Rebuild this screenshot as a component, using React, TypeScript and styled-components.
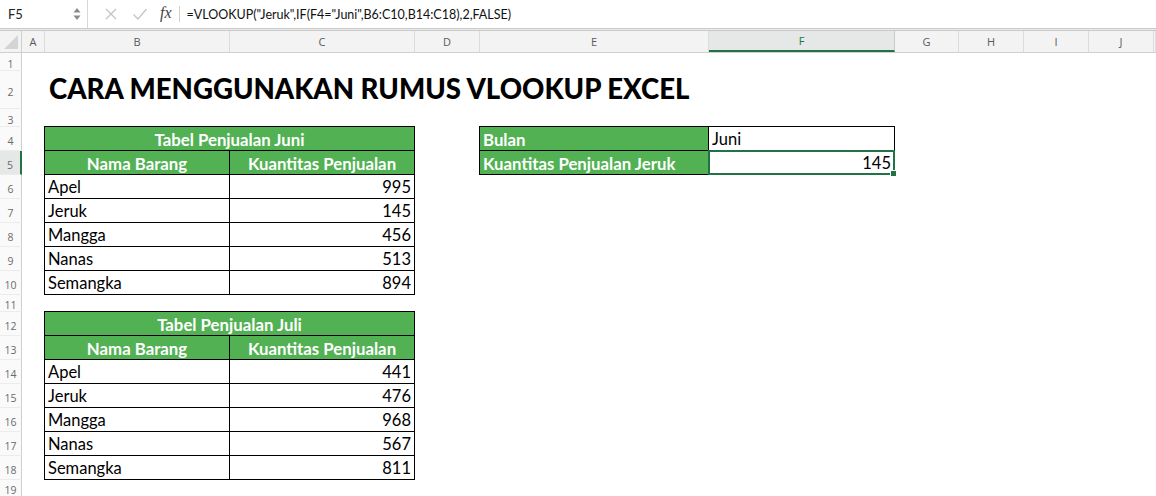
import React from 'react';
import styled, { createGlobalStyle, css } from 'styled-components';

const GlobalStyle = createGlobalStyle`
    html, body {
        margin: 0;
        padding: 0;
        background: #ffffff;
    }
    body {
        font-family: Lato, "Liberation Sans", sans-serif;
        width: 1156px;
        height: 496px;
        overflow: hidden;
    }
`

const GREEN = '#51b153'
const EXCEL_GREEN = '#217346'

const columns = [
    { name: 'A', width: 23 },
    { name: 'B', width: 185 },
    { name: 'C', width: 185 },
    { name: 'D', width: 65 },
    { name: 'E', width: 229 },
    { name: 'F', width: 186 },
    { name: 'G', width: 64 },
    { name: 'H', width: 65 },
    { name: 'I', width: 65 },
    { name: 'J', width: 65 },
]

const rowHeights = [18, 38, 18, 24, 24, 24, 24, 24, 24, 24, 17, 24, 24, 24, 24, 24, 24, 24, 17]

const gridCols = `22px ${columns.map((c) => c.width + 'px').join(' ')} 1fr`

const juni = [
    ['Apel', 995],
    ['Jeruk', 145],
    ['Mangga', 456],
    ['Nanas', 513],
    ['Semangka', 894],
]

const juli = [
    ['Apel', 441],
    ['Jeruk', 476],
    ['Mangga', 968],
    ['Nanas', 567],
    ['Semangka', 811],
]

const FORMULA = '=VLOOKUP("Jeruk",IF(F4="Juni",B6:C10,B14:C18),2,FALSE)'

export default function App() {
    return (
        <Window>
            <GlobalStyle />
            <FormulaBar>
                <NameBox>
                    <NameText>F5</NameText>
                    <Spinner>
                        <svg width="8" height="14" viewBox="0 0 8 14">
                            <path d="M4 1 L7.5 5.5 H0.5 Z" fill="#8a8a8a" />
                            <path d="M4 13 L7.5 8.5 H0.5 Z" fill="#8a8a8a" />
                        </svg>
                    </Spinner>
                </NameBox>
                <BarDivider />
                <IconButton>
                    <svg width="14" height="14" viewBox="0 0 14 14">
                        <path d="M2 2 L12 12 M12 2 L2 12" stroke="#c4c4c4" strokeWidth="1.3" fill="none" />
                    </svg>
                </IconButton>
                <IconButton>
                    <svg width="16" height="14" viewBox="0 0 16 14">
                        <path d="M1.5 7.5 L6 12 L14.5 2" stroke="#c4c4c4" strokeWidth="1.3" fill="none" />
                    </svg>
                </IconButton>
                <FxLabel>fx</FxLabel>
                <FxDivider />
                <FormulaText>{FORMULA}</FormulaText>
            </FormulaBar>

            <ColumnHeaders>
                <Corner>
                    <svg width="14" height="14" viewBox="0 0 14 14">
                        <path d="M14 0 L14 14 L0 14 Z" fill="#d4d4d4" />
                    </svg>
                </Corner>
                {columns.map((c) => (
                    <ColHeader key={c.name} $active={c.name === 'F'}>{c.name}</ColHeader>
                ))}
                <ColHeader />
            </ColumnHeaders>

            <Sheet>
                {rowHeights.map((_, i) => (
                    <RowHeader key={i} style={{ gridRow: i + 1 }} $active={i + 1 === 5}>{i + 1}</RowHeader>
                ))}

                <Title>CARA MENGGUNAKAN RUMUS VLOOKUP EXCEL</Title>

                <SalesTable $row={4} title="Tabel Penjualan Juni" data={juni} />
                <SalesTable $row={12} title="Tabel Penjualan Juli" data={juli} />

                <LookupTable>
                    <LabelCell>Bulan</LabelCell>
                    <ValueCell>Juni</ValueCell>
                    <LabelCell>Kuantitas Penjualan Jeruk</LabelCell>
                    <ValueCell $right>
                        145
                        <Selection>
                            <FillHandle />
                        </Selection>
                    </ValueCell>
                </LookupTable>
            </Sheet>
        </Window>
    );
}

type SalesTableProps = {
    $row: number
    title: string
    data: (string | number)[][]
}

const SalesTable = (props: SalesTableProps) => {
    return (
        <TableBlock $row={props.$row}>
            <HeadCell $span>{props.title}</HeadCell>
            <HeadCell>Nama Barang</HeadCell>
            <HeadCell>Kuantitas Penjualan</HeadCell>
            {props.data.map(([name, qty]) => (
                <React.Fragment key={name}>
                    <DataCell>{name}</DataCell>
                    <DataCell $right>{qty}</DataCell>
                </React.Fragment>
            ))}
        </TableBlock>
    )
}

const Window = styled.div`
    width: 1156px;
    height: 496px;
    background: #fff;
    overflow: hidden;
`

const FormulaBar = styled.div`
    display: flex;
    align-items: center;
    height: 28px;
    border-bottom: 1px solid #c9c9c9;
    box-shadow: 0 1px 0 #ececec, 0 2px 0 #c9c9c9;
    margin-bottom: 2px;
    background: #fff;
`

const NameBox = styled.div`
    display: flex;
    align-items: center;
    width: 87px;
    height: 100%;
    box-sizing: border-box;
    padding: 0 6px 0 8px;
`

const NameText = styled.span`
    flex: 1;
    font-family: Lato, "Liberation Sans", sans-serif;
    font-size: 13px;
    color: #222;
`

const Spinner = styled.span`
    display: flex;
    align-items: center;
`

const BarDivider = styled.div`
    width: 1px;
    height: 100%;
    background: #d8d8d8;
    margin-right: 8px;
`

const IconButton = styled.span`
    display: flex;
    align-items: center;
    justify-content: center;
    width: 29px;
    height: 100%;
`

const FxLabel = styled.span`
    font-family: "Liberation Serif", "DejaVu Serif", serif;
    font-style: italic;
    font-size: 16px;
    color: #444;
    margin-left: 6px;
    margin-right: 7px;
    padding-bottom: 2px;
`

const FxDivider = styled.div`
    width: 1px;
    height: 16px;
    background: #d0d0d0;
    margin-right: 7px;
`

const FormulaText = styled.span`
    font-family: Lato, "Liberation Sans", sans-serif;
    font-size: 12.5px;
    color: #111;
    white-space: nowrap;
`

const ColumnHeaders = styled.div`
    display: grid;
    grid-template-columns: ${gridCols};
    height: 22px;
    background: #f3f3f3;
    border-bottom: 1px solid #cfcfcf;
    box-sizing: border-box;
`

const Corner = styled.div`
    display: flex;
    align-items: flex-end;
    justify-content: flex-end;
    padding: 0 3px 3px 0;
    border-right: 1px solid #cfcfcf;
`

const ColHeader = styled.div<{ $active?: boolean }>`
    display: flex;
    align-items: center;
    justify-content: center;
    font-family: "Open Sans", "Liberation Sans", sans-serif;
    font-size: 11px;
    color: #5a5a5a;
    border-right: 1px solid #dcdcdc;
    box-sizing: border-box;
    ${(p) => p.$active && css`
        background: #e6e8e7;
        color: ${EXCEL_GREEN};
        border-bottom: 2px solid ${EXCEL_GREEN};
        border-right-color: #c9c9c9;
    `}
`

const Sheet = styled.div`
    display: grid;
    grid-template-columns: ${gridCols};
    grid-template-rows: ${rowHeights.map((h) => h + 'px').join(' ')};
`

const RowHeader = styled.div<{ $active?: boolean }>`
    grid-column: 1;
    display: flex;
    align-items: center;
    justify-content: center;
    font-family: "Open Sans", "Liberation Sans", sans-serif;
    font-size: 10.5px;
    color: #6a6a6a;
    background: #fafafa;
    border-right: 1px solid #cfcfcf;
    border-bottom: 1px solid #ececec;
    box-sizing: border-box;
    padding-top: 4px;
    ${(p) => p.$active && css`
        background: #e6e8e7;
        border-right: 2px solid ${EXCEL_GREEN};
    `}
`

const Title = styled.div`
    grid-column: 3 / span 6;
    grid-row: 2;
    align-self: end;
    padding: 0 0 3px 4px;
    font-family: Lato, "Liberation Sans", sans-serif;
    font-weight: 900;
    font-size: 27.6px;
    line-height: 34px;
    color: #000;
    white-space: nowrap;
`

const TableBlock = styled.div<{ $row: number }>`
    grid-column: 3 / span 2;
    grid-row: ${(p) => p.$row} / span 7;
    display: grid;
    grid-template-columns: 1fr 1fr;
    grid-auto-rows: 24px;
    border-left: 1px solid #000;
    border-top: 1px solid #000;
    margin-top: -1px;
    margin-left: -1px;
`

const cellBase = css`
    display: flex;
    align-items: center;
    border-right: 1px solid #000;
    border-bottom: 1px solid #000;
    box-sizing: border-box;
    font-family: Lato, "Liberation Sans", sans-serif;
    font-size: 16.5px;
    white-space: nowrap;
    padding-top: 1px;
`

const HeadCell = styled.div<{ $span?: boolean }>`
    ${cellBase};
    justify-content: center;
    background: ${GREEN};
    color: #fff;
    font-weight: 700;
    font-size: 16.8px;
    ${(p) => p.$span && css`
        grid-column: 1 / span 2;
    `}
`

const DataCell = styled.div<{ $right?: boolean }>`
    ${cellBase};
    padding-left: 3px;
    padding-right: 3px;
    color: #000;
    justify-content: ${(p) => (p.$right ? 'flex-end' : 'flex-start')};
`

const LookupTable = styled.div`
    grid-column: 6 / span 2;
    grid-row: 4 / span 2;
    display: grid;
    grid-template-columns: 229px 186px;
    grid-auto-rows: 24px;
    border-left: 1px solid #000;
    border-top: 1px solid #000;
    margin-top: -1px;
    margin-left: -1px;
`

const LabelCell = styled.div`
    ${cellBase};
    padding-left: 3px;
    background: ${GREEN};
    color: #fff;
    font-weight: 700;
    font-size: 16.8px;
`

const ValueCell = styled.div<{ $right?: boolean }>`
    ${cellBase};
    position: relative;
    padding-left: 3px;
    padding-right: 3px;
    color: #000;
    justify-content: ${(p) => (p.$right ? 'flex-end' : 'flex-start')};
`

const Selection = styled.div`
    position: absolute;
    left: -1px;
    top: -1px;
    right: -1px;
    bottom: -1px;
    border: 2px solid ${EXCEL_GREEN};
    pointer-events: none;
`

const FillHandle = styled.div`
    position: absolute;
    right: -4px;
    bottom: -4px;
    width: 5px;
    height: 5px;
    background: ${EXCEL_GREEN};
    border: 1px solid #fff;
`
